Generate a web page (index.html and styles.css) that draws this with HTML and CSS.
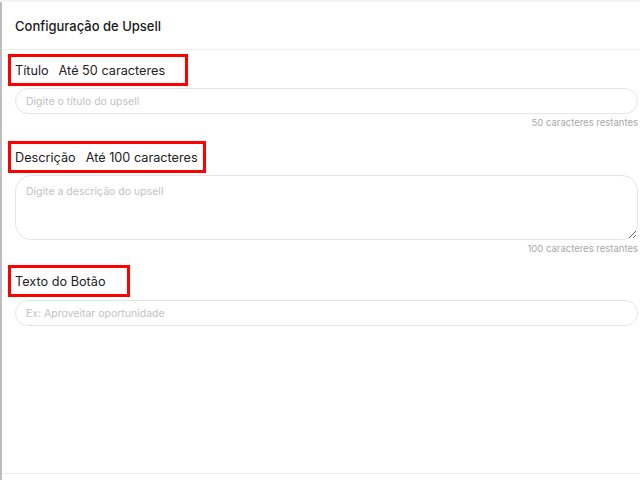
FILE: index.html
```html
<!DOCTYPE html>
<html lang="pt-BR">
<head>
<meta charset="utf-8">
<title>Configuração de Upsell</title>
<link rel="stylesheet" href="styles.css">
</head>
<body>
<div class="frame">
  <div class="panel">
    <div class="header">Configuração de Upsell</div>
    <div class="body">
      <div class="field">
        <div class="label label-title"><span>Título</span><span>Até 50 caracteres</span></div>
        <input class="input" type="text" placeholder="Digite o título do upsell">
        <div class="counter">50 caracteres restantes</div>
      </div>
      <div class="field field-area">
        <div class="label label-desc"><span>Descrição</span><span>Até 100 caracteres</span></div>
        <textarea class="textarea" placeholder="Digite a descrição do upsell"></textarea>
        <div class="counter">100 caracteres restantes</div>
      </div>
      <div class="field field-last">
        <div class="label label-button"><span>Texto do Botão</span></div>
        <input class="input" type="text" placeholder="Ex: Aproveitar oportunidade">
      </div>
    </div>
  </div>
  <div class="footer"></div>
</div>
</body>
</html>
```
FILE: styles.css
```css
* { box-sizing: border-box; }
html, body { margin: 0; padding: 0; }
body {
  width: 640px;
  height: 480px;
  overflow: hidden;
  background: #f3f3f3;
  font-family: Inter, "Liberation Sans", sans-serif;
  color: #1f1f1f;
}
.frame {
  margin-top: 2px;
  height: 478px;
  background: #fff;
  border-left: 2px solid #bdbdbd;
  padding-left: 1px;
  display: flex;
  flex-direction: column;
}
.panel {
  height: 472px;
  border-bottom: 1px solid #ececec;
  display: flex;
  flex-direction: column;
}
.header {
  height: 48px;
  border-bottom: 1px solid #f0f0f0;
  padding-left: 12px;
  display: flex;
  align-items: center;
  font-size: 13px;
  font-weight: 500;
  color: #1a1a1a;
}
.body {
  padding: 4px 2px 0 12px;
  display: flex;
  flex-direction: column;
}
.field {
  display: flex;
  flex-direction: column;
  margin-bottom: 12px;
}
.field-area { margin-bottom: 10px; }
.label {
  align-self: flex-start;
  margin-left: -7px;
  height: 32px;
  border: 3px solid #ff0000;
  padding: 0 0 0 4px;
  display: flex;
  align-items: center;
  gap: 10px;
  font-size: 12.7px;
  color: #222;
}
.label-title { width: 180px; }
.label-desc { width: 198px; }
.label-button { width: 122px; }
.input, .textarea {
  margin-top: 2px;
  width: 100%;
  border: 1px solid #e5e5e5;
  background: #fff;
  font-family: Inter, "Liberation Sans", sans-serif;
  font-size: 10.5px;
  color: #333;
  outline: none;
}
.field-last .input { margin-top: 3px; }
.input {
  height: 26px;
  border-radius: 13px;
  padding: 0 10px;
}
.textarea {
  height: 65px;
  border-radius: 16px;
  padding: 9px 10px;
  resize: vertical;
}
.input::placeholder, .textarea::placeholder { color: #c2c2c2; }
.counter {
  align-self: flex-end;
  font-size: 9.5px;
  color: #a8a8a8;
  line-height: 12px;
  margin-top: 3px;
}
```
